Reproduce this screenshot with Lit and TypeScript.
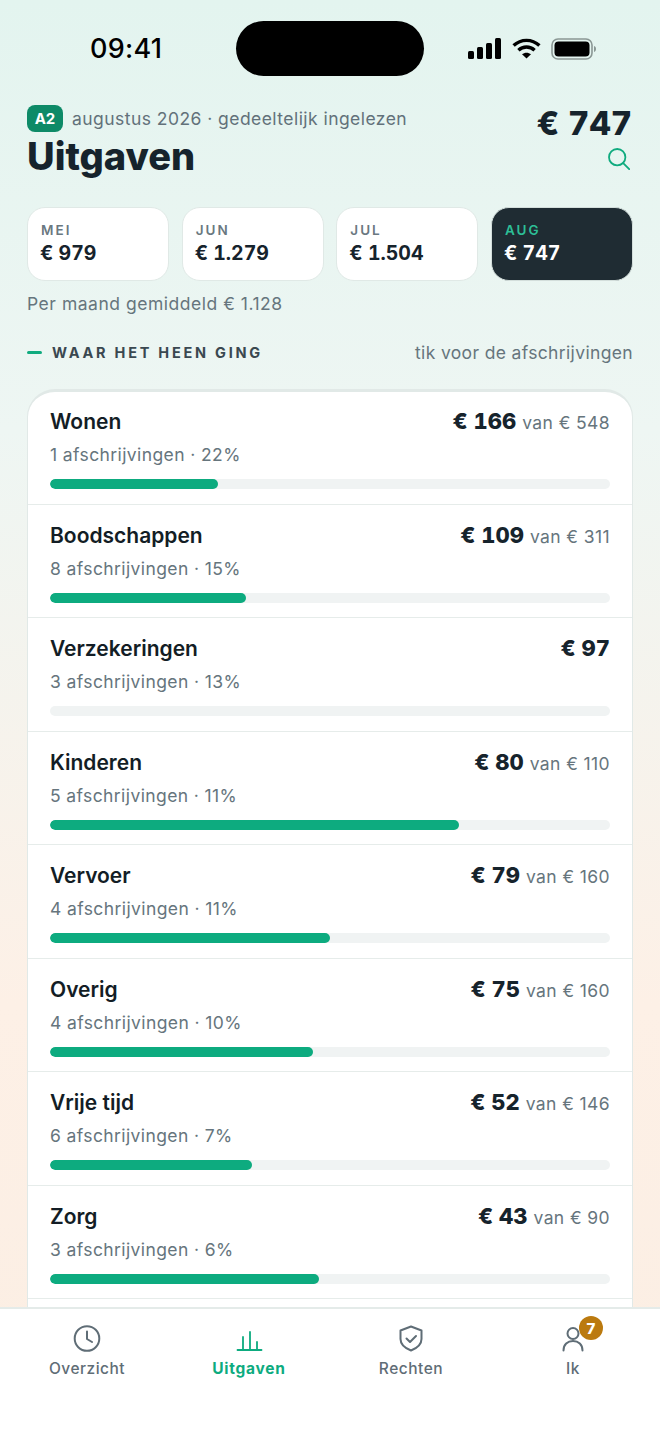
import { LitElement, html, css } from "lit";
import { customElement } from "lit/decorators.js";

const months = [
  { m: "MEI", v: "€ 979", on: false },
  { m: "JUN", v: "€ 1.279", on: false },
  { m: "JUL", v: "€ 1.504", on: false },
  { m: "AUG", v: "€ 747", on: true },
];
const rows = [
  { n: "Wonen", a: "€ 166", b: "van € 548", s: "1 afschrijvingen · 22%", w: 30 },
  { n: "Boodschappen", a: "€ 109", b: "van € 311", s: "8 afschrijvingen · 15%", w: 35 },
  { n: "Verzekeringen", a: "€ 97", b: "", s: "3 afschrijvingen · 13%", w: 0 },
  { n: "Kinderen", a: "€ 80", b: "van € 110", s: "5 afschrijvingen · 11%", w: 73 },
  { n: "Vervoer", a: "€ 79", b: "van € 160", s: "4 afschrijvingen · 11%", w: 50 },
  { n: "Overig", a: "€ 75", b: "van € 160", s: "4 afschrijvingen · 10%", w: 47 },
  { n: "Vrije tijd", a: "€ 52", b: "van € 146", s: "6 afschrijvingen · 7%", w: 36 },
  { n: "Zorg", a: "€ 43", b: "van € 90", s: "3 afschrijvingen · 6%", w: 48 },
];

@customElement("app-root")
export class AppRoot extends LitElement {
  static styles = css`
    :host {
      display: flex;
      flex-direction: column;
      width: 660px;
      height: 1434px;
      overflow: hidden;
      font-family: Inter, "Liberation Sans", sans-serif;
      background: linear-gradient(180deg, #e3f4ef 0%, #eef6f3 30%, #fdf0e6 70%, #fbeee3 100%);
      color: #16232c;
    }
    .status { height: 96px; flex: none; padding: 21px 32px 0 90px; box-sizing: border-box; display: flex; align-items: flex-start; }
    .time { font-size: 27px; font-weight: 500; color: #000; width: 146px; line-height: 55px; letter-spacing: 0.3px; }
    .island { width: 188px; height: 55px; border-radius: 28px; background: #000; }
    .sicons { margin-left: 44px; display: flex; align-items: center; gap: 11px; height: 55px; }
    main { flex: 1; min-height: 0; overflow: hidden; padding: 0 27px; }
    .head { display: flex; justify-content: space-between; height: 100px; }
    .meta { display: flex; align-items: center; gap: 9px; height: 27px; margin-top: 9px; }
    .badge { width: 36px; height: 27px; border-radius: 8px; background: #0d8a67; color: #fff; font-size: 15px; font-weight: 700; display: flex; align-items: center; justify-content: center; }
    .metat { font-size: 17.5px; color: #62717a; letter-spacing: 0.45px; }
    h1 { margin: 0; font-size: 38px; line-height: 48px; font-weight: 800; color: #16232c; }
    .right { display: flex; flex-direction: column; align-items: flex-end; }
    .total { font-size: 33px; font-weight: 800; line-height: 44px; margin-top: 5px; margin-right: 1px; font-variant-numeric: tabular-nums; }
    .search { margin-top: 3px; margin-right: 3px; }
    .months { display: grid; grid-template-columns: repeat(4, 1fr); gap: 12.67px; margin-top: 11px; }
    .mon { height: 74px; box-sizing: border-box; border: 1px solid #e0e9e6; border-radius: 18px; background: #fff; padding: 14px 13px 0; }
    .mon.on { background: #1f2c33; border-color: #d3dedb; }
    .ml { font-size: 13.5px; line-height: 16px; font-weight: 600; letter-spacing: 2px; color: #6a7880; }
    .mon.on .ml { color: #2dbf97; }
    .mv { font-size: 19.5px; line-height: 26px; font-weight: 700; color: #16232c; margin: 2px 0 0 -1px; font-variant-numeric: tabular-nums; }
    .mon.on .mv { color: #fff; }
    .avg { font-size: 17.5px; color: #66757d; margin-top: 12px; line-height: 22px; letter-spacing: 0.52px; }
    .sec { display: flex; align-items: center; margin-top: 25px; height: 24px; }
    .dash { width: 15px; height: 3px; border-radius: 2px; background: #10ab7f; margin-right: 10px; }
    .st { font-size: 14.5px; font-weight: 700; letter-spacing: 2.75px; color: #3a4850; flex: 1; }
    .hint { font-size: 17.5px; color: #66757d; letter-spacing: 0.35px; }
    .card { margin-top: 25px; padding-bottom: 40px; background: #fff; border: 1px solid #e1e9e7; border-top: 3px solid #e1e9e7; border-radius: 28px 28px 0 0; }
    .row { height: 113.55px; box-sizing: border-box; padding: 13px 22px 0; border-bottom: 1.5px solid #e6ecea; }
    .row:first-child { height: 112.6px; padding-top: 12px; }
    .top { display: flex; justify-content: space-between; align-items: baseline; height: 34px; line-height: 34px; }
    .name { font-size: 21px; font-weight: 600; color: #131d25; }
    .amt { font-size: 22px; font-weight: 800; color: #16232c; font-variant-numeric: tabular-nums; }
    .van { font-size: 17.5px; color: #66757d; margin-left: 6px; letter-spacing: 0.4px; }
    .sub { font-size: 17.5px; color: #66757d; line-height: 24px; margin-top: 5px; letter-spacing: 0.4px; }
    .track { height: 10px; border-radius: 5px; background: #f0f3f3; margin-top: 12px; overflow: hidden; }
    .fill { height: 100%; border-radius: 5px; background: #0dab7f; }
    nav { flex: none; height: 127px; box-sizing: border-box; background: #fff; border-top: 2px solid #e4ebe9; display: grid; grid-template-columns: repeat(4, 1fr); padding: 0 6px; }
    .tab { display: flex; flex-direction: column; align-items: center; padding-top: 13px; font-size: 15.5px; font-weight: 500; color: #5f6d76; position: relative; letter-spacing: 0.5px; }
    .tab.on { color: #0dab7f; font-weight: 700; letter-spacing: 0.75px; }
    .tab span { line-height: 20px; margin-top: 5px; }
    .ic { position: relative; width: 32px; height: 32px; }
    .ic svg { display: block; }
    .dot { position: absolute; left: 22px; top: -6px; width: 24px; height: 24px; border-radius: 50%; background: #bb7a0f; color: #fff; font-size: 15px; font-weight: 800; display: flex; align-items: center; justify-content: center; letter-spacing: 0; }
  `;

  render() {
    return html`
      <div class="status">
        <div class="time">09:41</div>
        <div class="island"></div>
        <div class="sicons">
          <svg width="33" height="21" viewBox="0 0 33 21" fill="#000">
            <rect x="0" y="13" width="6" height="8" rx="1.5"/><rect x="9" y="9" width="6" height="12" rx="1.5"/>
            <rect x="18" y="5" width="6" height="16" rx="1.5"/><rect x="27" y="0" width="6" height="21" rx="1.5"/>
          </svg>
          <svg width="29" height="21" viewBox="0 0 29 21" fill="none" stroke="#000" stroke-width="3.4">
            <path d="M1.6 7.6C9 .6 20 .6 27.4 7.6"/><path d="M6.4 12.2c4.6-4.2 11.6-4.2 16.2 0"/>
            <path d="M14.5 20.6 10 16.3c2.6-2.2 6.4-2.2 9 0z" fill="#000" stroke="none"/>
          </svg>
          <svg width="46" height="22" viewBox="0 0 46 22" style="margin-left:-1px">
            <rect x="1" y="1" width="40" height="20" rx="6" fill="none" stroke="#8a9794" stroke-width="1.6"/>
            <rect x="3.5" y="3.5" width="35" height="15" rx="4" fill="#000"/>
            <path d="M43 8c1.5.4 2 1.6 2 3s-.5 2.600-2 3z" fill="#8a9794"/>
          </svg>
        </div>
      </div>
      <main>
        <div class="head">
          <div>
            <div class="meta"><div class="badge">A2</div><div class="metat">augustus 2026 · gedeeltelijk ingelezen</div></div>
            <h1>Uitgaven</h1>
          </div>
          <div class="right">
            <div class="total">€ 747</div>
            <svg class="search" width="22" height="22" viewBox="0 0 22 22" fill="none" stroke="#10ab7f" stroke-width="1.8">
              <circle cx="9.200" cy="9.200" r="8.200"/><path d="m15.200 15.200 6 6" stroke-linecap="round"/>
            </svg>
          </div>
        </div>
        <div class="months">
          ${months.map((m) => html`<div class="mon ${m.on ? "on" : ""}"><div class="ml">${m.m}</div><div class="mv">${m.v}</div></div>`)}
        </div>
        <div class="avg">Per maand gemiddeld € 1.128</div>
        <div class="sec"><div class="dash"></div><div class="st">WAAR HET HEEN GING</div><div class="hint">tik voor de afschrijvingen</div></div>
        <div class="card">
          ${rows.map((r) => html`
            <div class="row">
              <div class="top">
                <div class="name">${r.n}</div>
                <div><span class="amt">${r.a}</span>${r.b ? html`<span class="van">${r.b}</span>` : ""}</div>
              </div>
              <div class="sub">${r.s}</div>
              <div class="track"><div class="fill" style="width:${r.w}%"></div></div>
            </div>`)}
        </div>
      </main>
      <nav>
        <div class="tab">
          <div class="ic"><svg width="32" height="32" viewBox="0 0 32 32" fill="none" stroke="#5f6d76" stroke-width="2" stroke-linecap="round" stroke-linejoin="round"><circle cx="16" cy="16.500" r="12.300"/><path d="M16 9.500v7.500l5 3"/></svg></div>
          <span>Overzicht</span>
        </div>
        <div class="tab on">
          <div class="ic"><svg width="32" height="32" viewBox="0 0 32 32" fill="none" stroke="#0dab7f" stroke-width="1.800" stroke-linecap="round"><path d="M4.500 28h24M10 28V15M17 28V10M24 28v-8"/></svg></div>
          <span>Uitgaven</span>
        </div>
        <div class="tab">
          <div class="ic"><svg width="32" height="32" viewBox="0 0 32 32" fill="none" stroke="#5f6d76" stroke-width="2" stroke-linecap="round" stroke-linejoin="round"><path d="M16 4.500 26.500 8.500v8.500c0 5.500-4 9-10.500 11.500C9.500 26 5.500 22.500 5.500 17V8.500z"/><path d="m11.500 16.500 3.500 3.500 6-6"/></svg></div>
          <span>Rechten</span>
        </div>
        <div class="tab">
          <div class="ic"><svg width="32" height="32" viewBox="0 0 32 32" fill="none" stroke="#5f6d76" stroke-width="2" stroke-linecap="round"><circle cx="16" cy="11.500" r="5.500"/><path d="M6.500 28.500c0-6 4-9.500 9.500-9.500s9.500 3.500 9.500 9.500"/></svg><div class="dot">7</div></div>
          <span>Ik</span>
        </div>
      </nav>
    `;
  }
}
